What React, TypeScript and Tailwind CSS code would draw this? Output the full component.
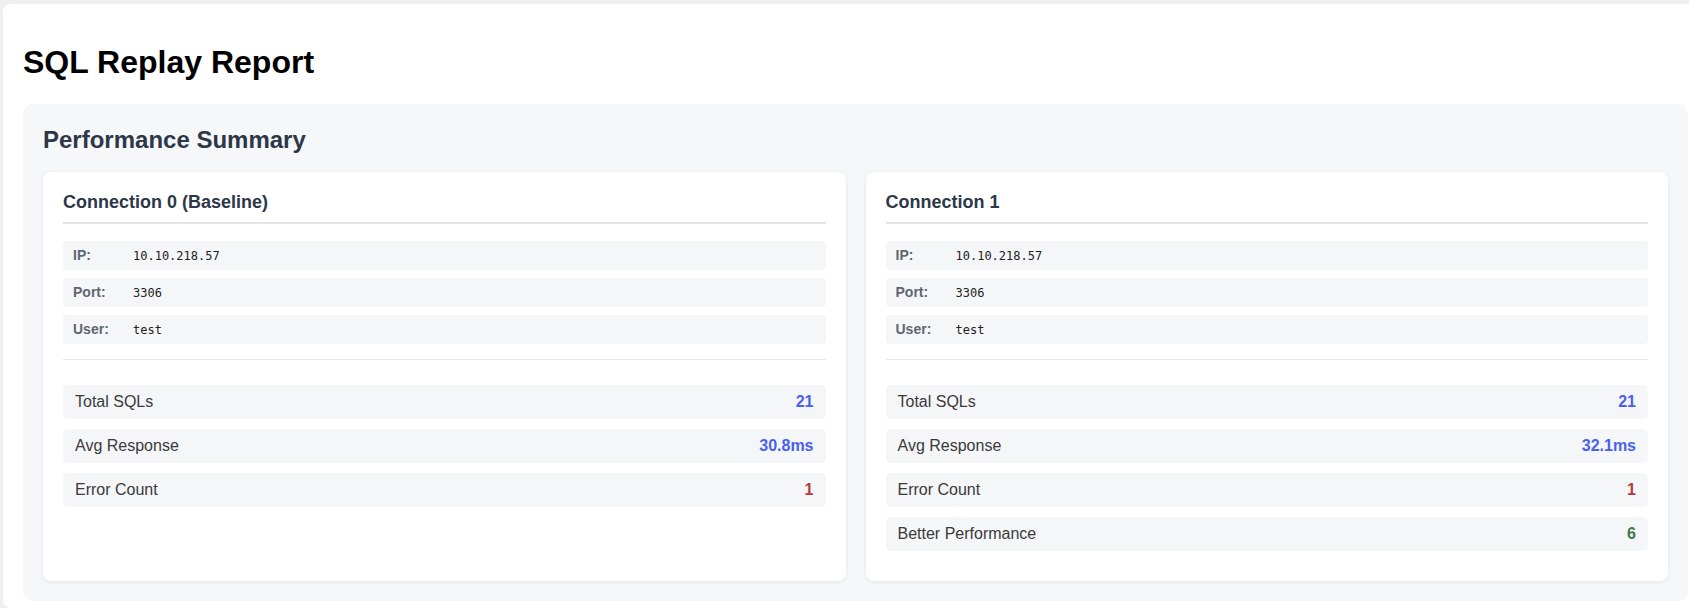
import React from 'react';

type Metric = { label: string; value: string; tone: 'blue' | 'red' | 'green' };

interface Conn {
  title: string;
  ip: string;
  port: string;
  user: string;
  metrics: Metric[];
}

const connections: Conn[] = [
  {
    title: 'Connection 0 (Baseline)',
    ip: '10.10.218.57',
    port: '3306',
    user: 'test',
    metrics: [
      { label: 'Total SQLs', value: '21', tone: 'blue' },
      { label: 'Avg Response', value: '30.8ms', tone: 'blue' },
      { label: 'Error Count', value: '1', tone: 'red' },
    ],
  },
  {
    title: 'Connection 1',
    ip: '10.10.218.57',
    port: '3306',
    user: 'test',
    metrics: [
      { label: 'Total SQLs', value: '21', tone: 'blue' },
      { label: 'Avg Response', value: '32.1ms', tone: 'blue' },
      { label: 'Error Count', value: '1', tone: 'red' },
      { label: 'Better Performance', value: '6', tone: 'green' },
    ],
  },
];

const toneClass = {
  blue: 'text-[#4a5ff0]',
  red: 'text-[#b83a3a]',
  green: 'text-[#3d7a48]',
};

const InfoRow: React.FC<{ label: string; value: string }> = ({ label, value }) => (
  <div className="flex items-center h-[29px] px-[10px] bg-[#f5f6f8] rounded-[4px]">
    <span className="w-[60px] text-[14px] font-bold text-[#5f6672]">{label}</span>
    <span className="text-[12px] text-[#222] font-['DejaVu_Sans_Mono',monospace]">{value}</span>
  </div>
);

const ConnectionCard: React.FC<{ conn: Conn }> = ({ conn }) => (
  <div className="bg-white rounded-[8px] shadow-[0_1px_4px_rgba(0,0,0,0.08)] px-5 pt-5 pb-[30px]">
    <h3 className="text-[18px] font-bold text-[#2d3748] pb-[10px] border-b-2 border-[#e4e5ea] leading-[20px]">
      {conn.title}
    </h3>
    <div className="mt-[17px] flex flex-col gap-2 pb-[15px] border-b border-[#e6e7ea]">
      <InfoRow label="IP:" value={conn.ip} />
      <InfoRow label="Port:" value={conn.port} />
      <InfoRow label="User:" value={conn.user} />
    </div>
    <div className="mt-[25px] flex flex-col gap-[10px]">
      {conn.metrics.map((m) => (
        <div
          key={m.label}
          className="flex items-center justify-between h-[34px] px-3 bg-[#f5f6f8] rounded-[5px] text-[16px]"
        >
          <span className="text-[#3a3a3a]">{m.label}</span>
          <span className={`font-bold ${toneClass[m.tone]}`}>{m.value}</span>
        </div>
      ))}
    </div>
  </div>
);

export default function App() {
  return (
    <div className="h-[608px] overflow-hidden bg-[#f0f0f0] pl-[3px] pt-[4px] font-['Liberation_Sans',Arial,sans-serif]">
      <div className="w-[1705px] bg-white rounded-[8px] p-5 pb-[7px]">
        <h1 className="text-[32px] font-bold text-black mt-[20px] mb-[23px] leading-[37px]">SQL Replay Report</h1>
        <div className="bg-[#f6f7f9] rounded-[10px] p-5">
          <h2 className="text-[24px] font-bold text-[#2d3748] leading-[27px] mt-[2px] mb-[19px]">
            Performance Summary
          </h2>
          <div className="grid grid-cols-2 gap-5">
            {connections.map((c) => (
              <ConnectionCard key={c.title} conn={c} />
            ))}
          </div>
        </div>
      </div>
    </div>
  );
}
